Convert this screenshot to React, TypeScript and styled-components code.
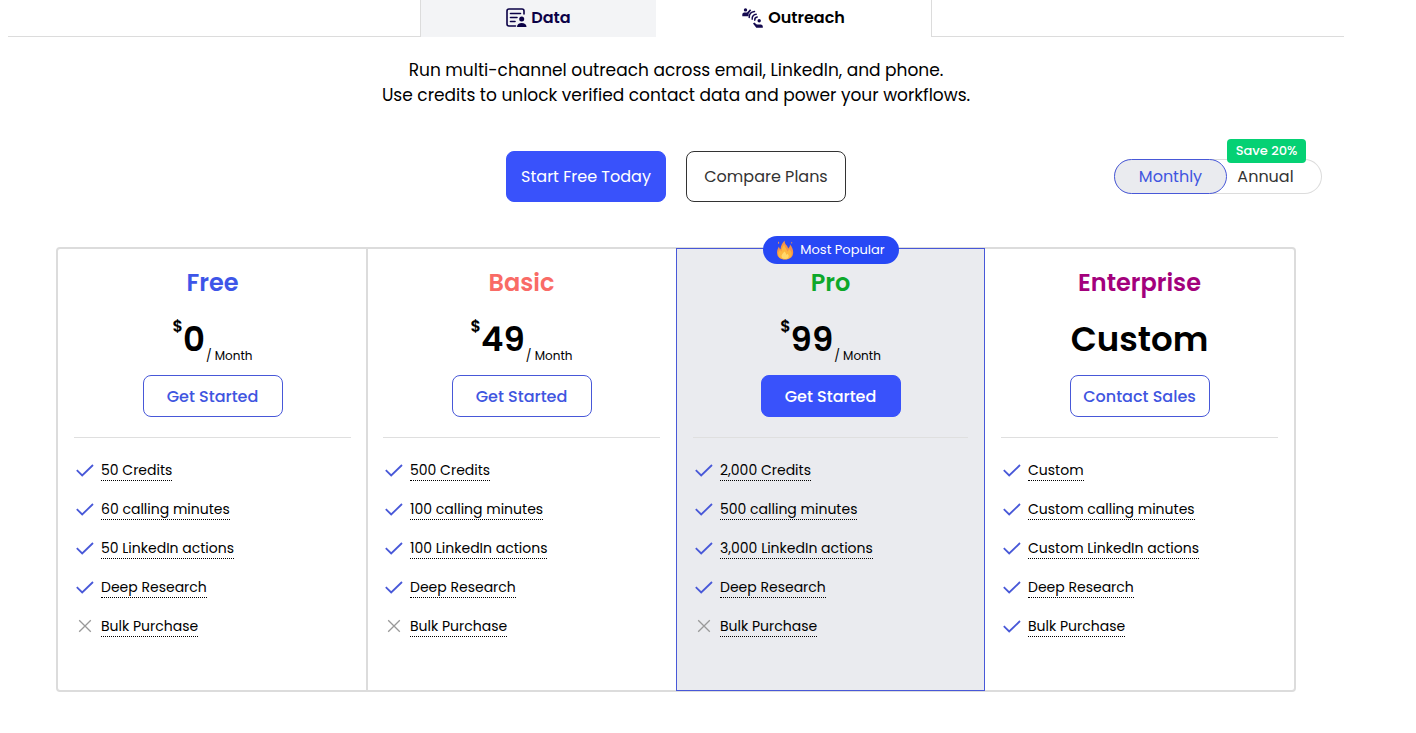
import React from "react";
import styled, { createGlobalStyle, css } from "styled-components";

const GlobalStyle = createGlobalStyle`
  * { box-sizing: border-box; }
  body {
    margin: 0;
    background: #fff;
    color: #000;
    font-family: Poppins, Inter, "Liberation Sans", sans-serif;
    font-size: 16px;
  }
  button { font-family: inherit; cursor: pointer; }
`;

const Page = styled.main`
  padding: 0 72px 40px 8px;
`;

const TabBar = styled.div`
  display: grid;
  grid-template-columns: 1fr 236px 276px 1fr;
  height: 37px;
`;

const TabRule = styled.div`
  border-bottom: 1px solid #dcdcdc;
`;

const Tab = styled.button<{ $active?: boolean }>`
  display: flex;
  align-items: center;
  justify-content: center;
  gap: 4px;
  padding: 0 0 2px;
  border: 0 solid #dcdcdc;
  border-left-width: ${(p) => (p.$active ? 0 : 1)}px;
  border-right-width: ${(p) => (p.$active ? 1 : 0)}px;
  background: ${(p) => (p.$active ? "#fff" : "#f3f4f6")};
  color: ${(p) => (p.$active ? "#000" : "#0b0146")};
  font-size: 16px;
  font-weight: 600;
`;

const Intro = styled.p`
  margin: 21px 0 0;
  text-align: center;
  font-size: 17px;
  line-height: 25px;
`;

const Actions = styled.div`
  display: grid;
  grid-template-columns: 1fr auto 1fr;
  align-items: center;
  margin-top: 43px;
  padding-right: 22px;
`;

const ActionButtons = styled.div`
  grid-column: 2;
  display: flex;
  gap: 20px;
  margin-left: 22px;
`;

const ActionButton = styled.button<{ $primary?: boolean }>`
  width: 160px;
  height: 51px;
  padding: 0;
  border: 1px solid ${(p) => (p.$primary ? "#3952fb" : "#333")};
  border-radius: 8px;
  background: ${(p) => (p.$primary ? "#3952fb" : "#fff")};
  color: ${(p) => (p.$primary ? "#fff" : "#333")};
  font-size: 16px;
  white-space: nowrap;
`;

const Billing = styled.div`
  position: relative;
  justify-self: end;
  display: flex;
  width: 208px;
  height: 35px;
  border-radius: 18px;
  box-shadow: inset 0 0 0 1px #dcdcdc;
`;

const BillingOption = styled.button<{ $active?: boolean }>`
  width: ${(p) => (p.$active ? 113 : 77)}px;
  padding: 0;
  border: 1px solid ${(p) => (p.$active ? "#4858d8" : "transparent")};
  border-radius: 18px;
  background: ${(p) => (p.$active ? "#eaebef" : "transparent")};
  color: ${(p) => (p.$active ? "#3f55e0" : "#333")};
  font-size: 16px;
`;

const SaveBadge = styled.span`
  position: absolute;
  top: -20px;
  right: 16px;
  width: 79px;
  border-radius: 4px;
  background: #05d174;
  color: #fff;
  font-size: 13px;
  font-weight: 500;
  line-height: 24px;
  text-align: center;
`;

const Plans = styled.section`
  display: grid;
  grid-template-columns: repeat(4, 1fr);
  margin: 45px 48px 0;
  border: 2px solid #dcdcdc;
  border-radius: 4px;
`;

const PlanCard = styled.article<{ $featured?: boolean; $divided?: boolean }>`
  position: relative;
  display: flex;
  flex-direction: column;
  align-items: center;
  padding: 16px 16px 52px;
  ${(p) =>
    p.$divided &&
    css`
      margin-left: -1px;
      padding-left: 15px;
      border-left: 2px solid #dcdcdc;
    `}
  ${(p) =>
    p.$featured &&
    css`
      margin: -1px 0;
      border: 1px solid #4858d8;
      background: #eaebef;
    `}
`;

const PopularBadge = styled.span`
  position: absolute;
  top: -13px;
  display: flex;
  align-items: center;
  justify-content: center;
  gap: 6px;
  width: 136px;
  height: 28px;
  border-radius: 14px;
  background: #2748f5;
  color: #fff;
  font-size: 13px;
`;

const PlanName = styled.h2<{ $color: string }>`
  margin: 0;
  color: ${(p) => p.$color};
  font-size: 24px;
  font-weight: 600;
  line-height: 36px;
`;

const Price = styled.div`
  display: flex;
  height: 48px;
  margin-top: 14px;
  font-size: 34px;
  font-weight: 600;
  line-height: 48px;
`;

const Currency = styled.span`
  font-size: 16px;
  line-height: 24px;
`;

const Period = styled.span`
  align-self: flex-end;
  margin-bottom: -5px;
  padding-left: 1px;
  font-size: 12px;
  font-weight: 400;
  line-height: 24px;
`;

const PlanButton = styled.button<{ $primary?: boolean }>`
  width: 140px;
  height: 42px;
  margin-top: 12px;
  padding: 0;
  border: 1px solid ${(p) => (p.$primary ? "#3952fb" : "#4858d8")};
  border-radius: 8px;
  background: ${(p) => (p.$primary ? "#3952fb" : "#fff")};
  color: ${(p) => (p.$primary ? "#fff" : "#3f55e0")};
  font-size: 16px;
  font-weight: 500;
`;

const Features = styled.ul`
  align-self: stretch;
  display: grid;
  gap: 15px;
  margin: 20px 0 0;
  padding: 20px 0 0 2px;
  border-top: 1px solid #dfdfdf;
  list-style: none;
`;

const Feature = styled.li`
  display: flex;
  align-items: center;
  gap: 7px;
  height: 24px;
`;

const FeatureText = styled.span`
  border-bottom: 1px dotted #000;
  font-size: 14px;
  line-height: 20px;
`;

const DataIcon = () => (
  <svg width="21" height="20" viewBox="0 0 21 20" fill="none" stroke="#0b0146" strokeWidth="1.6" aria-hidden="true">
    <path d="M9.500 18H3a2 2 0 0 1-2-2V3a2 2 0 0 1 2-2h13a2 2 0 0 1 2 2v3" strokeLinecap="round" />
    <path d="M4.500 5.500h10M4.500 9.500h6.500M4.500 13.500h4.500" strokeLinecap="round" />
    <circle cx="15.700" cy="11" r="2.500" fill="#0b0146" stroke="none" />
    <path d="M11 19c0-2.600 2-4 4.700-4s4.800 1.400 4.800 4z" fill="#0b0146" stroke="none" />
  </svg>
);

const OutreachIcon = () => (
  <svg width="22" height="22" viewBox="0 0 22 22" fill="none" stroke="#140a4f" strokeWidth="1.500" strokeLinecap="round" aria-hidden="true">
    <g fill="#140a4f" stroke="none">
      <circle cx="3.500" cy="2.900" r="1.700" />
      <path d="M.3 9.200V7.400C.3 5.900 1.500 5.400 3 5.400h2L8 2.300l1.200 1L6.600 6.700v2.500z" />
      <circle cx="17.200" cy="13.800" r="1.700" />
      <path d="M20.800 20.800h-6.500l-3.300-4.200 1.300-1 2.500 1.800h3c1.800 0 3 .6 3 2z" />
    </g>
    <path d="M7.200 10.500C7.200 7.500 9.300 5 12.500 4.600M10.200 12.200C9.900 9.500 11.700 7.500 14.200 7.300M12.800 13.200c-.2-1.700.8-3 2.400-3.200" />
  </svg>
);

const FireIcon = () => (
  <svg width="18" height="20" viewBox="0 0 18 20" aria-hidden="true">
    <path d="M9 19.500C3.500 19.500 1 16.300 1 12.500 1 10 2 8 3 6.500c.2 1.500.6 2.300 1.500 2.700C4.800 5.500 6.500 2.500 8.700.5c-.3 2.700 1.200 3.800 2.300 5.300.7 1 1 1.800 1.100 2.600C13.500 7.500 14 6 14 4.500c2 2 3.200 5 3.200 8 0 4-3 7-8.200 7z" fill="#f5924a" />
    <path d="M9.200 19.300c-4.300 0-7-2-7-5.300 0-1.900 1-3.300 2-4.400.2 1 .7 1.600 1.400 1.800 0-2.800 1.100-5.300 2.900-6.900-.1 2.400 1.200 3.400 2 4.900.4.700.6 1.400.6 2.100 1-.5 1.700-1.300 1.900-2.500 1.700 1.200 2.700 3 2.700 4.900 0 3.200-2.600 5.400-6.500 5.400z" fill="#fcb73f" />
    <path d="M9.200 19c-2.200 0-3.700-1.100-3.700-2.900 0-1.900 1.900-2.700 2.700-4.700 1.700 1 2 2.300 2 3.400.6-.2 1-.6 1.200-1.100.8.700 1.300 1.500 1.300 2.400 0 1.800-1.400 2.900-3.500 2.900z" fill="#ffd86b" />
    <path d="M2.500 1.500c.9.800.9 1.700.2 2.500-.8-.7-.9-1.600-.2-2.500zM15.700 1.800c.7.700.7 1.400.1 2-.7-.5-.7-1.300-.1-2z" fill="#f5924a" />
  </svg>
);

const CheckIcon = () => (
  <svg width="18" height="18" viewBox="0 0 18 18" fill="none" stroke="#4858d8" strokeWidth="1.800" role="img" aria-label="Included">
    <path d="M.8 9.200l5.400 5.300L17 4" />
  </svg>
);

const CrossIcon = () => (
  <svg width="18" height="18" viewBox="0 0 18 18" fill="none" stroke="#999" strokeWidth="1.300" role="img" aria-label="Not included">
    <path d="M3.200 3.200l11.600 11.600M14.800 3.200L3.200 14.800" />
  </svg>
);

type Plan = {
  name: string;
  color: string;
  price?: string;
  cta: string;
  features: string[];
  bulk?: boolean;
  featured?: boolean;
  divided?: boolean;
};

const plans: Plan[] = [
  { name: "Free", color: "#3d55e8", price: "0", cta: "Get Started", features: ["50 Credits", "60 calling minutes", "50 LinkedIn actions", "Deep Research"] },
  { name: "Basic", color: "#f96b66", price: "49", cta: "Get Started", features: ["500 Credits", "100 calling minutes", "100 LinkedIn actions", "Deep Research"], divided: true },
  { name: "Pro", color: "#0ea82a", price: "99", cta: "Get Started", features: ["2,000 Credits", "500 calling minutes", "3,000 LinkedIn actions", "Deep Research"], featured: true },
  { name: "Enterprise", color: "#a3007c", cta: "Contact Sales", features: ["Custom", "Custom calling minutes", "Custom LinkedIn actions", "Deep Research"], bulk: true },
];

const PlanColumn = ({ plan }: { plan: Plan }) => (
  <PlanCard $featured={plan.featured} $divided={plan.divided}>
    {plan.featured && (
      <PopularBadge>
        <FireIcon />
        Most Popular
      </PopularBadge>
    )}
    <PlanName $color={plan.color}>{plan.name}</PlanName>
    <Price>
      {plan.price ? (
        <>
          <Currency>$</Currency>
          {plan.price}
          <Period>/ Month</Period>
        </>
      ) : (
        "Custom"
      )}
    </Price>
    <PlanButton type="button" $primary={plan.featured}>{plan.cta}</PlanButton>
    <Features>
      {plan.features.map((feature) => (
        <Feature key={feature}>
          <CheckIcon />
          <FeatureText>{feature}</FeatureText>
        </Feature>
      ))}
      <Feature>
        {plan.bulk ? <CheckIcon /> : <CrossIcon />}
        <FeatureText>Bulk Purchase</FeatureText>
      </Feature>
    </Features>
  </PlanCard>
);

export default function App() {
  return (
    <Page>
      <GlobalStyle />
      <TabBar>
        <TabRule />
        <Tab type="button"><DataIcon />Data</Tab>
        <Tab type="button" $active><OutreachIcon />Outreach</Tab>
        <TabRule />
      </TabBar>
      <Intro>
        Run multi-channel outreach across email, LinkedIn, and phone.
        <br />
        Use credits to unlock verified contact data and power your workflows.
      </Intro>
      <Actions>
        <ActionButtons>
          <ActionButton type="button" $primary>Start Free Today</ActionButton>
          <ActionButton type="button">Compare Plans</ActionButton>
        </ActionButtons>
        <Billing>
          <BillingOption type="button" $active>Monthly</BillingOption>
          <BillingOption type="button">Annual</BillingOption>
          <SaveBadge>Save 20%</SaveBadge>
        </Billing>
      </Actions>
      <Plans>
        {plans.map((plan) => (
          <PlanColumn key={plan.name} plan={plan} />
        ))}
      </Plans>
    </Page>
  );
}
